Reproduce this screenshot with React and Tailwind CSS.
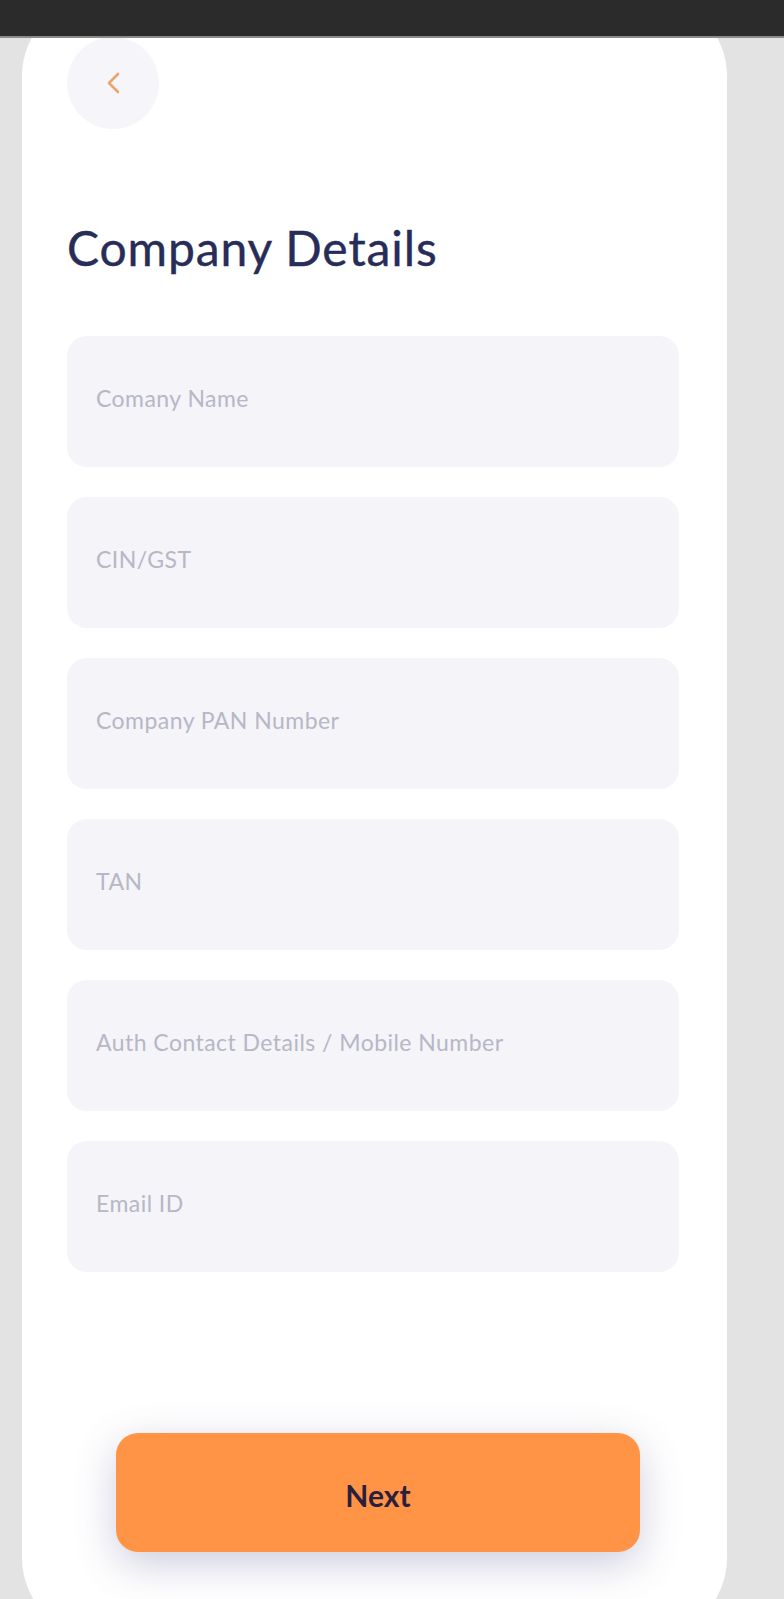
import React from "react";

const fields = [
  "Comany Name",
  "CIN/GST",
  "Company PAN Number",
  "TAN",
  "Auth Contact Details / Mobile Number",
  "Email ID",
];

const App = () => {
  return (
    <div
      className="h-[1599px] overflow-hidden bg-[#e3e3e3] flex flex-col"
      style={{ fontFamily: "Lato, 'Open Sans', sans-serif" }}
    >
      {/* status bar */}
      <div className="relative z-10 h-[38px] shrink-0 bg-[#2b2b2b] border-b-2 border-[#8a8a8a]"></div>

      {/* card */}
      <div className="mt-[-42px] ml-[22px] w-[705px] h-[1642px] shrink-0 bg-white rounded-[80px] flex flex-col pt-[41px] pl-[45px]">
        <button className="w-[92px] h-[92px] rounded-full bg-[#f5f5fa] flex items-center justify-center">
          <svg width="14" height="22" viewBox="0 0 14 22" fill="none">
            <polyline
              points="12,2 3,11 12,20"
              stroke="#eca46a"
              strokeWidth="2.6"
              strokeLinecap="round"
              strokeLinejoin="round"
            />
          </svg>
        </button>

        <h1 className="mt-[95px] text-[48px] leading-[48px] tracking-[0.9px] text-[#282c58] font-normal [-webkit-text-stroke:0.4px_#282c58]">
          Company Details
        </h1>

        {/* form fields */}
        <div className="mt-[64px] w-[612px] flex flex-col gap-[30px]">
          {fields.map((label) => (
            <div
              key={label}
              className="h-[131px] rounded-[20px] bg-[#f4f4f9] flex items-center pl-[29px] pb-[7px]"
            >
              <span className="text-[23px] tracking-[0.45px] text-[#b7b7c5]">{label}</span>
            </div>
          ))}
        </div>

        <button className="mt-[161px] ml-[49px] w-[524px] h-[119px] rounded-[22px] bg-[#ff9447] shadow-[0_12px_40px_rgba(90,90,150,0.3)] flex items-center justify-center pt-[6px]">
          <span className="text-[30px] font-bold text-[#2a1f3d]">Next</span>
        </button>
      </div>
    </div>
  );
};

export default App;
